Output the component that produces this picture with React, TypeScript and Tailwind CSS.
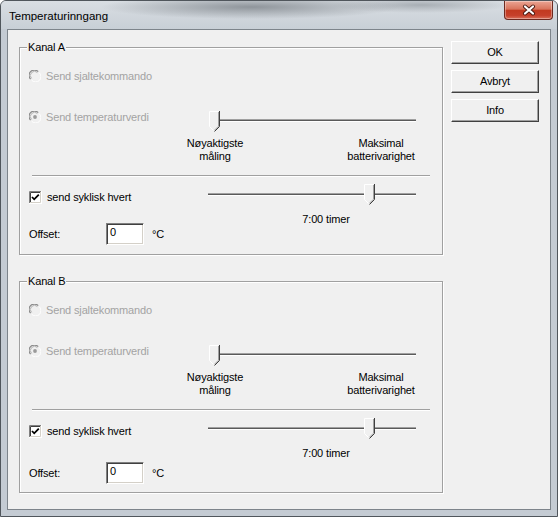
import React from 'react';

const DIM = 'text-[#a3a3a3]';

const Radio = ({ checked }: { checked?: boolean }) => (
    <svg width="12" height="12" viewBox="0 0 12 12" className="shrink-0">
        <circle cx="6" cy="6" r="5.5" fill="#f0f0f0" />
        <path d="M1.6 9.2 A5 5 0 0 1 9.2 1.6" stroke="#8a8a8a" strokeWidth="1.2" fill="none" />
        <path d="M2.6 8.4 A4 4 0 0 1 8.4 2.6" stroke="#b4b4b4" fill="none" />
        <path d="M10.4 2.8 A5 5 0 0 1 2.8 10.4" stroke="#ffffff" fill="none" />
        {checked && <circle cx="6" cy="6" r="1.9" fill="#9a9a9a" />}
    </svg>
);

const Checkbox = () => (
    <svg width="13" height="13" viewBox="0 0 13 13" className="shrink-0">
        <rect x="0" y="0" width="13" height="13" fill="#ffffff" />
        <path d="M0.5 12.5 V0.5 H12.5" stroke="#808080" fill="none" />
        <path d="M1.5 11.5 V1.5 H11.5" stroke="#404040" fill="none" />
        <path d="M12.5 0 V12.5 H0" stroke="#ffffff" fill="none" />
        <path d="M11.5 1 V11.5 H1" stroke="#d4d0c8" fill="none" />
        <path d="M3 6 L5.2 8.3 L9.8 3.6" stroke="#000000" strokeWidth="1.8" fill="none" />
    </svg>
);

const Thumb = () => (
    <svg width="11" height="21" viewBox="0 0 11 21">
        <polygon points="0,0 10.5,0 10.5,15.5 5.25,20.5 0,15.5" fill="#f0f0f0" />
        <path d="M0.5 15.5 V0.5 H9.5" stroke="#ffffff" fill="none" />
        <path d="M0.5 15.5 L5 20" stroke="#ffffff" fill="none" />
        <path d="M10.5 0 V15.5 L5.5 20.5" stroke="#404040" fill="none" />
        <path d="M9.5 1 V15.2 L5.3 19.4" stroke="#a0a0a0" fill="none" />
    </svg>
);

const Track = () => (
    <div className="h-[3px] border-t border-t-[#a0a0a0] border-b border-b-white bg-[#5a5a5a]" />
);

const Button = ({ children }: { children: React.ReactNode }) => (
    <div className="w-[88px] h-[23px] flex items-center justify-center border border-t-white border-l-white border-r-[#404040] border-b-[#404040] shadow-[inset_-1px_-1px_0_#a0a0a0] bg-[#f0f0f0] text-black">
        {children}
    </div>
);

const Group: React.FC<{ label: string; tall?: boolean }> = ({ label, tall }) => (
    <div className={`relative w-[424px] border border-[#a0a0a0] shadow-[inset_1px_1px_0_#fff,1px_1px_0_#fff] ${tall ? 'h-[212px]' : 'h-[208px]'}`}>
        <span className="absolute left-[7px] -top-[7px] bg-[#f0f0f0] px-[1px] leading-[13px] text-black">{label}</span>

        <div className="flex flex-col pl-[9px]">
            <div className={`mt-[20px] h-[16px] flex items-center gap-[5px] ${DIM}`}>
                <Radio />
                <span>Send sjaltekommando</span>
            </div>

            <div className="mt-[25px] h-[23px] flex items-start">
                <div className={`w-[180px] h-[16px] flex items-center gap-[5px] ${DIM}`}>
                    <Radio checked />
                    <span>Send temperaturverdi</span>
                </div>
                <div className="relative mt-[2px] w-[207px] h-[21px]">
                    <div className="pt-[8px] pl-[3px]">
                        <Track />
                    </div>
                    <div className="absolute left-0 top-0">
                        <Thumb />
                    </div>
                </div>
            </div>

            <div className="mt-[5px] h-[26px] flex text-center leading-[13px] text-black">
                <div className="w-[80px] ml-[146px]">Nøyaktigste<br />måling</div>
                <div className="w-[80px] ml-[86px]">Maksimal<br />batterivarighet</div>
            </div>

            <div className="mt-[12px] ml-[3px] w-[398px] h-[2px] border-t border-t-[#a0a0a0] border-b border-b-white" />

            <div className="mt-[7px] h-[21px] flex items-start">
                <div className="w-[176px] mt-[5px] h-[16px] flex items-center gap-[5px] text-black">
                    <Checkbox />
                    <span>send syklisk hvert</span>
                </div>
                <div className="relative w-[211px] h-[21px]">
                    <div className="pt-[9px] pl-[3px]">
                        <Track />
                    </div>
                    <div className="absolute left-[159px] top-0">
                        <Thumb />
                    </div>
                </div>
            </div>

            <div className="mt-[8px] h-[10px] leading-[12px] text-black">
                <div className="w-[80px] ml-[257px] text-center">7:00 timer</div>
            </div>

            <div className={`h-[22px] flex items-center text-black ${tall ? 'mt-[5px]' : ''}`}>
                <span className="w-[77px]">Offset:</span>
                <div className="w-[38px] h-[22px] bg-white border border-t-[#808080] border-l-[#808080] border-r-white border-b-white shadow-[inset_1px_1px_0_#404040,inset_-1px_-1px_0_#d4d0c8] pl-[3px] pt-[2px] leading-[13px]">
                    0
                </div>
                <span className="ml-[8px]">°C</span>
            </div>
        </div>
    </div>
);

export default function App() {
    return (
        <div className="w-[558px] h-[517px] flex flex-col bg-[#c4cbd3] border border-[#50565c] rounded-t-[6px] overflow-hidden font-['Liberation_Sans',Arial,sans-serif]">
            <div className="h-[28px] flex items-start justify-between bg-[radial-gradient(ellipse_150px_12px_at_250px_6px,#8f959b,transparent),radial-gradient(ellipse_90px_8px_at_420px_4px,#a8aeb4,transparent),linear-gradient(180deg,#d9dee3,#c8cfd6)]">
                <span className="pl-[8px] pt-[8px] text-[11.5px] leading-[14px] text-black">Temperaturinngang</span>
                <div className="mr-[4px] w-[49px] h-[19px] rounded-b-[4px] border border-t-0 border-[#6d2a20] bg-[linear-gradient(180deg,#eba594_0%,#d8745c_45%,#c23a20_52%,#c6402a_80%,#d9705a_100%)] shadow-[inset_0_0_0_1px_rgba(255,255,255,0.35)] flex items-center justify-center">
                    <svg width="14" height="12" viewBox="0 0 14 12">
                        <path d="M3 2.5 L11 9.5 M11 2.5 L3 9.5" stroke="#4a1a12" strokeWidth="4" strokeLinecap="round" />
                        <path d="M3 2.5 L11 9.5 M11 2.5 L3 9.5" stroke="#ffffff" strokeWidth="2.2" strokeLinecap="round" />
                    </svg>
                </div>
            </div>

            <div className="flex-1 mx-[6px] mb-[6px] border border-[#7d848b] bg-[#f0f0f0] flex text-[11px] leading-[13px] tracking-[-0.15px]">
                <div className="pl-[11px] pt-[17px] flex flex-col">
                    <Group label="Kanal A" />
                    <div className="mt-[26px]">
                        <Group label="Kanal B" tall />
                    </div>
                </div>
                <div className="ml-[8px] pt-[11px] flex flex-col gap-[6px]">
                    <Button>OK</Button>
                    <Button>Avbryt</Button>
                    <Button>Info</Button>
                </div>
            </div>
        </div>
    );
}
